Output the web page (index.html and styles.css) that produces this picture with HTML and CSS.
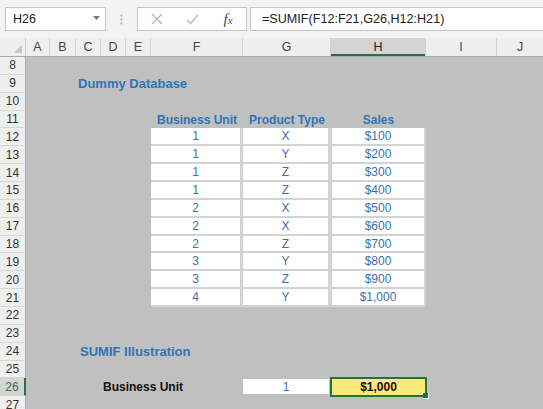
FILE: index.html
```html
<!DOCTYPE html>
<html>
<head>
<meta charset="utf-8">
<link rel="stylesheet" href="styles.css">
</head>
<body>
<div class="fbar">
  <div class="namebox"><span>H26</span><svg class="dd" width="7" height="4" viewBox="0 0 7 4"><polygon points="0,0 7,0 3.5,4" fill="#7a7a7a"/></svg></div>
  <div class="dots"><svg width="3" height="11" viewBox="0 0 3 11"><circle cx="1.5" cy="1.5" r="1" fill="#a9a9a9"/><circle cx="1.5" cy="5.5" r="1" fill="#a9a9a9"/><circle cx="1.5" cy="9.5" r="1" fill="#a9a9a9"/></svg></div>
  <div class="btns">
    <span class="b b1"><svg width="12" height="12" viewBox="0 0 12 12"><path d="M1 1 L11 11 M11 1 L1 11" stroke="#b3b3b3" stroke-width="1.3" fill="none"/></svg></span>
    <span class="b b2"><svg width="13" height="11" viewBox="0 0 13 11"><path d="M1 6 L4.5 9.5 L12 1" stroke="#bdbdbd" stroke-width="1.6" fill="none"/></svg></span>
    <span class="b b3"><span class="fx"><i class="ff">f</i><i class="fxx">x</i></span></span>
  </div>
  <div class="formula">=SUMIF(F12:F21,G26,H12:H21)</div>
</div>

<div class="colhdr">
  <div class="corner"><svg width="8" height="8" viewBox="0 0 8 8"><polygon points="8,0 8,8 0,8" fill="#c4c4c4"/></svg></div>
  <div class="ch">A</div><div class="ch">B</div><div class="ch">C</div><div class="ch">D</div><div class="ch">E</div>
  <div class="ch">F</div><div class="ch">G</div><div class="ch active">H</div><div class="ch">I</div><div class="ch last">J</div>
</div>

<div class="sheet">
  <div class="row"><div class="rh">8</div></div>
  <div class="row"><div class="rh">9</div><div class="title">Dummy Database</div></div>
  <div class="row"><div class="rh">10</div></div>
  <div class="row"><div class="rh">11</div><div class="th f">Business Unit</div><div class="th g">Product Type</div><div class="th h">Sales</div></div>
  <div class="row"><div class="rh">12</div><div class="dc f">1</div><div class="dc g">X</div><div class="dc h">$100</div></div>
  <div class="row"><div class="rh">13</div><div class="dc f">1</div><div class="dc g">Y</div><div class="dc h">$200</div></div>
  <div class="row"><div class="rh">14</div><div class="dc f">1</div><div class="dc g">Z</div><div class="dc h">$300</div></div>
  <div class="row"><div class="rh">15</div><div class="dc f">1</div><div class="dc g">Z</div><div class="dc h">$400</div></div>
  <div class="row"><div class="rh">16</div><div class="dc f">2</div><div class="dc g">X</div><div class="dc h">$500</div></div>
  <div class="row"><div class="rh">17</div><div class="dc f">2</div><div class="dc g">X</div><div class="dc h">$600</div></div>
  <div class="row"><div class="rh">18</div><div class="dc f">2</div><div class="dc g">Z</div><div class="dc h">$700</div></div>
  <div class="row"><div class="rh">19</div><div class="dc f">3</div><div class="dc g">Y</div><div class="dc h">$800</div></div>
  <div class="row"><div class="rh">20</div><div class="dc f">3</div><div class="dc g">Z</div><div class="dc h">$900</div></div>
  <div class="row"><div class="rh">21</div><div class="dc f">4</div><div class="dc g">Y</div><div class="dc h">$1,000</div></div>
  <div class="row"><div class="rh">22</div></div>
  <div class="row"><div class="rh">23</div></div>
  <div class="row"><div class="rh">24</div><div class="title t2">SUMIF Illustration</div></div>
  <div class="row"><div class="rh">25</div></div>
  <div class="row"><div class="rh sel">26</div><div class="label">Business Unit</div><div class="inp g">1</div><div class="result h">$1,000</div></div>
  <div class="row"><div class="rh">27</div></div>
</div>
</body>
</html>
```

FILE: styles.css
```css
:root {
  --cols: 26px 24px 26px 25px 25px 25px 92px 88px 95px 71px 1fr;
}
html, body {
  margin: 0;
  padding: 0;
}
body {
  width: 543px;
  height: 409px;
  overflow: hidden;
  background: #c0c0c0;
  font-family: "Liberation Sans", Arial, sans-serif;
}

/* formula bar */
.fbar {
  height: 38px;
  box-sizing: border-box;
  padding-top: 7px;
  background: #f3f3f3;
  display: flex;
  align-items: flex-start;
}
.namebox {
  margin-left: 5px;
  width: 101px;
  height: 24px;
  box-sizing: border-box;
  border: 1px solid #c6c6c6;
  background: #fff;
  display: flex;
  align-items: center;
  justify-content: space-between;
  padding: 0 5px 0 7px;
  font-size: 12.5px;
  color: #222;
}
.dd { margin-top: -2px; }
.dots {
  width: 31px;
  height: 24px;
  display: flex;
  align-items: center;
  justify-content: center;
}
.btns {
  width: 110px;
  height: 24px;
  box-sizing: border-box;
  border: 1px solid #c6c6c6;
  background: #fff;
  display: flex;
  align-items: center;
}
.b {
  display: flex;
  align-items: center;
  justify-content: center;
  height: 22px;
}
.b1 { width: 37px; }
.b2 { width: 35px; }
.b3 { width: 36px; }
.fx {
  font-family: "Liberation Serif", "Times New Roman", serif;
  color: #444;
  display: flex;
  align-items: baseline;
}
.ff { font-size: 15px; }
.fxx { font-size: 11px; margin-left: 0px; }
.formula {
  flex: 1;
  margin-left: 3px;
  height: 24px;
  box-sizing: border-box;
  border: 1px solid #c6c6c6;
  border-right: none;
  background: #fff;
  display: flex;
  align-items: center;
  padding-left: 11px;
  font-size: 12.6px;
  color: #222;
}

/* column headers */
.colhdr {
  display: grid;
  grid-template-columns: var(--cols);
  height: 19px;
  box-sizing: border-box;
  background: #efefef;
  border-bottom: 1px solid #ababab;
}
.corner {
  border-right: 1px solid #d0d0d0;
  display: flex;
  align-items: flex-end;
  justify-content: flex-end;
  padding: 0 3px 3px 0;
}
.ch {
  border-right: 1px solid #d4d4d4;
  display: flex;
  align-items: center;
  justify-content: center;
  font-size: 12.5px;
  color: #444;
}
.ch.last { border-right: none; }
.ch.active {
  background: #d4d4d4;
  box-shadow: inset 0 -2px 0 #217346;
  color: #222;
}

/* sheet rows */
.row {
  display: grid;
  grid-template-columns: var(--cols);
  height: 17.86px;
}
.rh {
  grid-column: 1;
  background: #efefef;
  box-sizing: border-box;
  border-right: 1px solid #ababab;
  border-bottom: 1px solid #d6d6d6;
  display: flex;
  align-items: center;
  justify-content: center;
  font-size: 12px;
  color: #333;
}
.rh.sel {
  background: #d4d4d4;
  border-right: 2px solid #217346;
  color: #3b6b50;
}
.f { grid-column: 7; }
.g { grid-column: 8; }
.h { grid-column: 9; }

.title {
  grid-column: 4 / 9;
  padding-left: 2px;
  display: flex;
  align-items: center;
  white-space: nowrap;
  font-weight: bold;
  font-size: 13px;
  color: #2e75b6;
}
.title.t2 { padding-left: 4px; }
.th {
  display: flex;
  align-items: center;
  justify-content: center;
  font-weight: bold;
  font-size: 12px;
  color: #2e75b6;
  white-space: nowrap;
}
.dc {
  background: #fff;
  box-sizing: border-box;
  border-right: 3px solid #d3d3d3;
  border-bottom: 2px solid #d3d3d3;
  display: flex;
  align-items: center;
  justify-content: center;
  font-size: 12px;
  color: #3a70aa;
}
.dc.h { border-left: 1px solid #d3d3d3; border-right: 2px solid #d3d3d3; }

.label {
  grid-column: 4 / 8;
  padding-left: 27px;
  display: flex;
  align-items: center;
  font-weight: bold;
  font-size: 12px;
  color: #111;
  white-space: nowrap;
}
.inp {
  background: #fff;
  box-sizing: border-box;
  border-right: 2px solid #c0c0c0;
  margin: 0.5px 0 2px 0;
  display: flex;
  align-items: center;
  justify-content: center;
  font-size: 12px;
  color: #3a70aa;
}
.result {
  position: relative;
  background: #fbea78;
  outline: 2px solid #217346;
  outline-offset: -1px;
  display: flex;
  align-items: center;
  justify-content: center;
  font-weight: bold;
  font-size: 12px;
  color: #111;
}
.result::after {
  content: "";
  position: absolute;
  right: -3px;
  bottom: -3px;
  width: 5px;
  height: 5px;
  background: #217346;
  border: 1px solid #fff;
  border-top: none;
  border-left: none;
}
```
